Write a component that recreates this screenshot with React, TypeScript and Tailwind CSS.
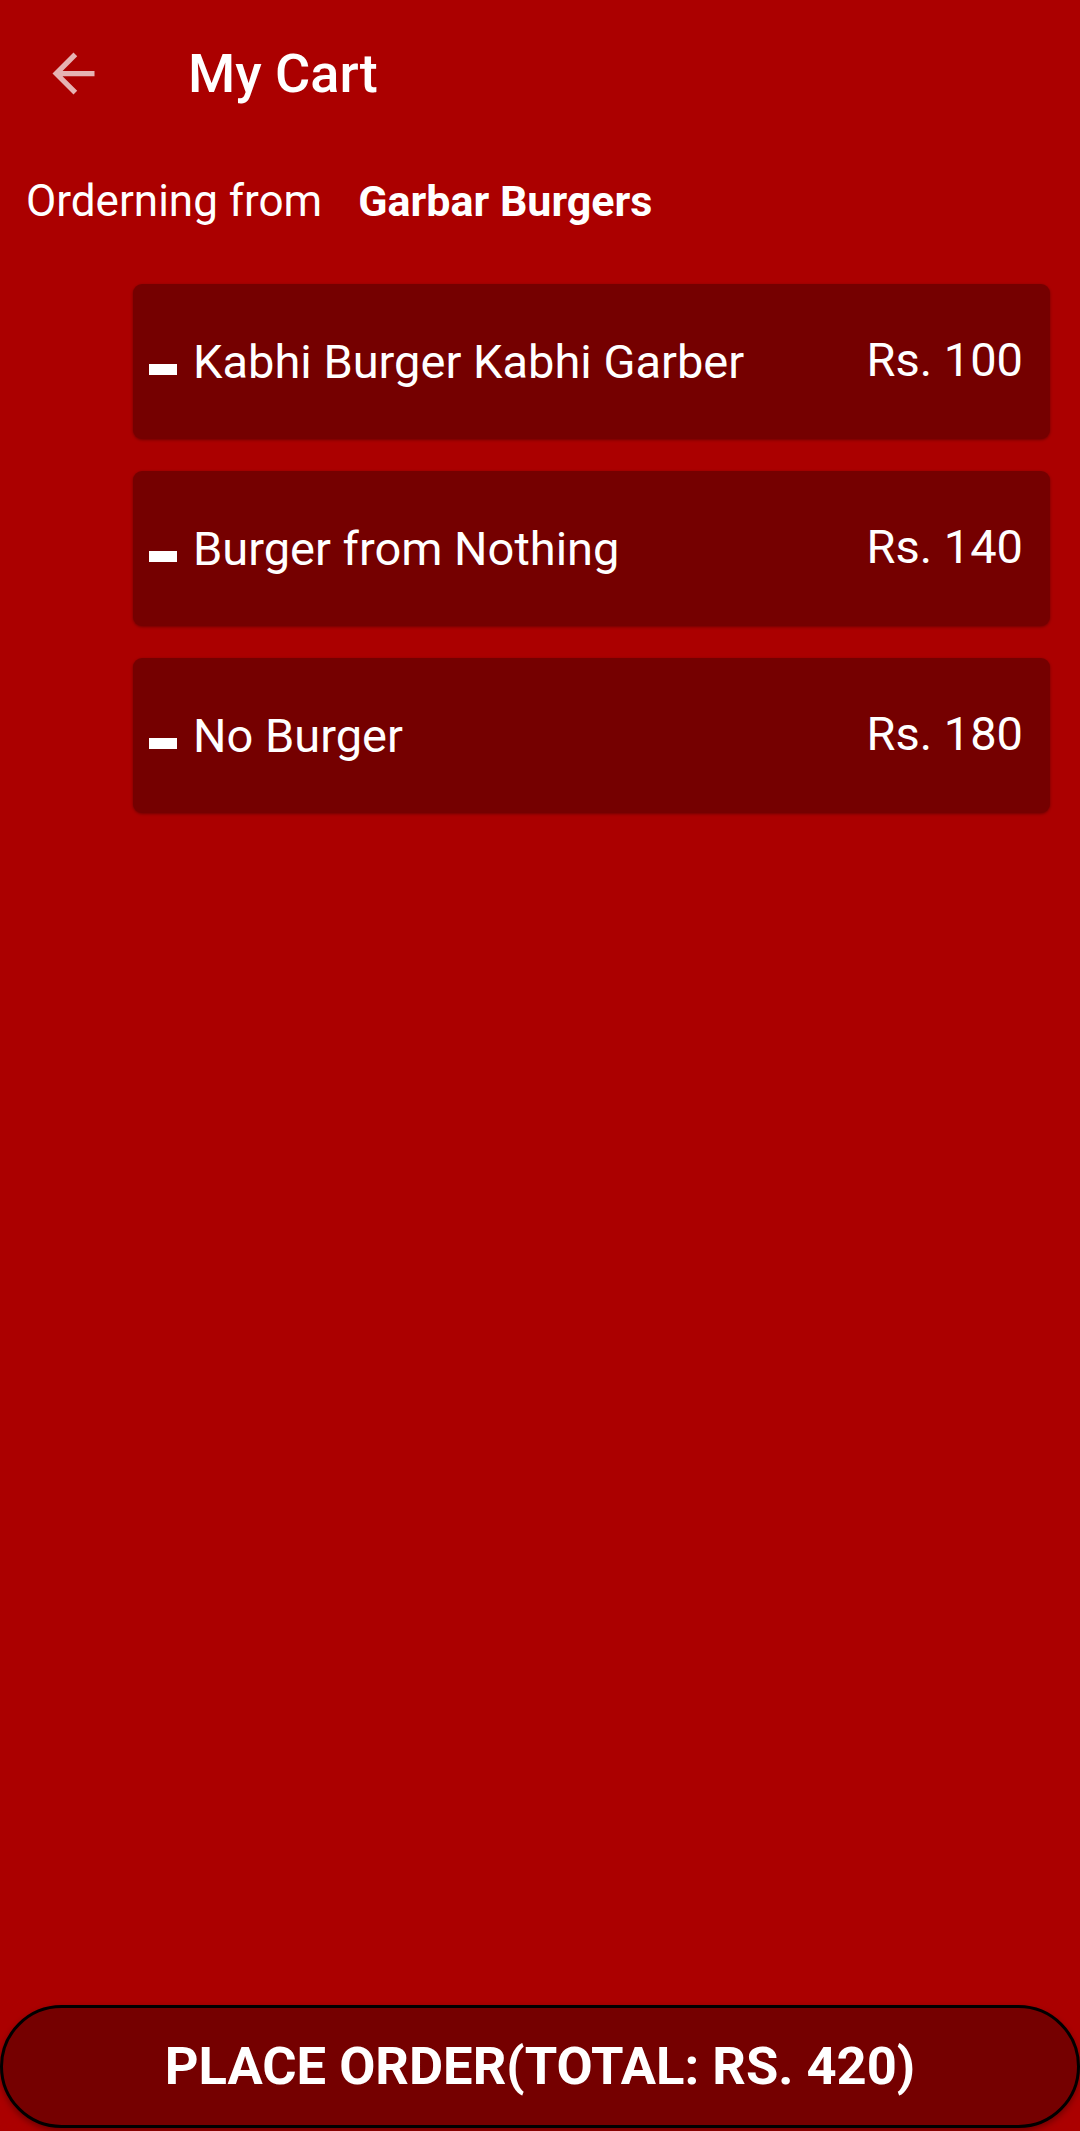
import React from 'react';

const cartItems = [
  { name: 'Kabhi Burger Kabhi Garber', price: 100 },
  { name: 'Burger from Nothing', price: 140 },
  { name: 'No Burger', price: 180 },
];

const BackArrow: React.FC<{ className?: string }> = ({ className }) => (
  <svg viewBox="0 0 24 24" className={className} fill="currentColor">
    <path d="M20 11H7.83l5.59-5.59L12 4l-8 8 8 8 1.41-1.41L7.83 13H20v-2z" />
  </svg>
);

const CartItem: React.FC<{ name: string; price: number }> = ({ name, price }) => (
  <div className="h-[155px] rounded-[9px] bg-[#750000] shadow-[0_1px_3px_rgba(0,0,0,0.35)] flex items-center justify-between pl-[16px] pr-[27px]">
    <div className="flex items-center">
      <div className="w-[28px] h-[11px] bg-white mt-[16px]"></div>
      <span className="ml-[16px] text-[47px] leading-none text-white">{name}</span>
    </div>
    <span className="text-[47px] leading-none text-white mb-[4px]">Rs. {price}</span>
  </div>
);

export default function App() {
  const total = cartItems.reduce((sum, i) => sum + i.price, 0);

  return (
    <div className="h-[2131px] bg-[#ab0000] flex flex-col font-['Roboto',sans-serif]">
      <div className="h-[147px] flex items-center">
        <div className="w-[147px] h-[147px] flex items-center justify-center">
          <BackArrow className="w-[63px] h-[63px] text-white/70" />
        </div>
        <h1 className="ml-[41px] text-[54px] font-medium text-white leading-none">My Cart</h1>
      </div>

      <div className="h-[108px] flex items-center pl-[26px] text-[44px] text-white leading-none">
        <span>Orderning from</span>
        <span className="ml-[36px] text-[43px] font-bold">Garbar Burgers</span>
      </div>

      <div className="flex flex-col gap-[32px] pt-[29px] pl-[133px] pr-[30px]">
        {cartItems.map((item) => (
          <CartItem key={item.name} name={item.name} price={item.price} />
        ))}
      </div>

      <div className="mt-auto mb-[3px]">
        <button className="w-full h-[123px] rounded-full border-[3px] border-black bg-[#750000] shadow-[0_3px_6px_rgba(0,0,0,0.35)] flex items-center justify-center text-white text-[52.5px] font-bold leading-none">
          PLACE ORDER(TOTAL: RS. {total})
        </button>
      </div>
    </div>
  );
}
